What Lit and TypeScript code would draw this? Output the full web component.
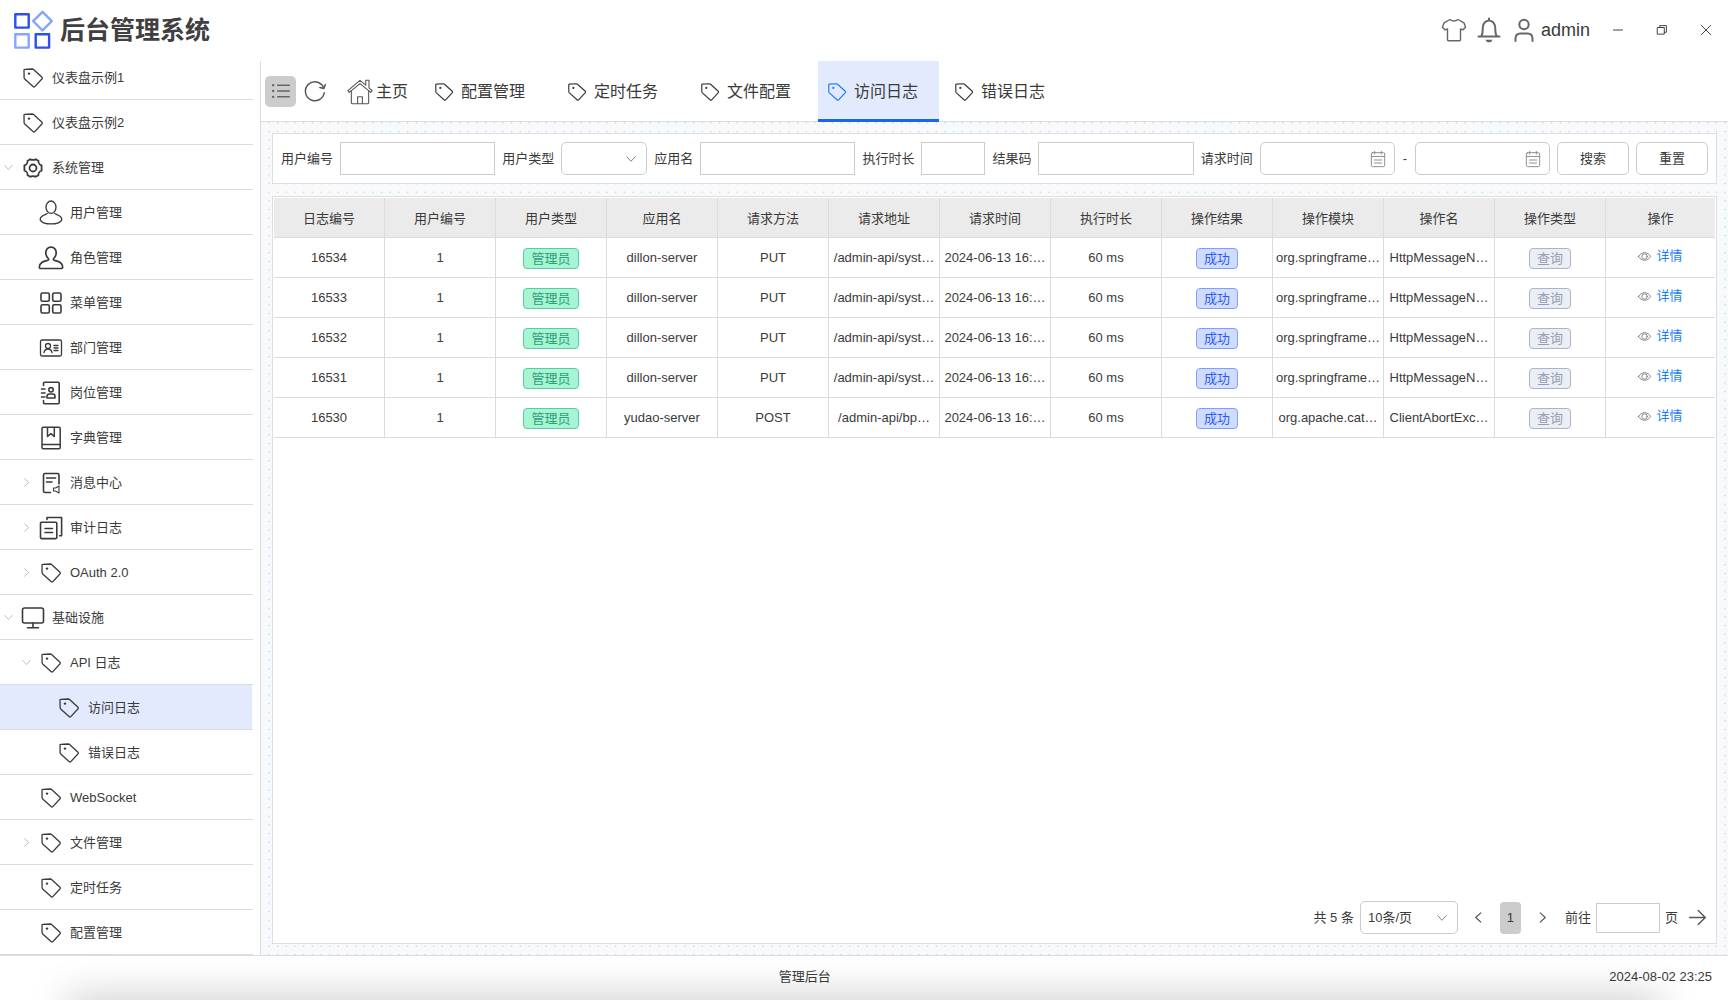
import { LitElement, html, css, svg, type SVGTemplateResult } from "lit";
import { customElement, property, state } from "lit/decorators.js";
import { classMap } from "lit/directives/class-map.js";

type IconName =
  | "tag" | "gear" | "user" | "role" | "grid" | "idcard" | "contacts" | "book"
  | "message" | "audit" | "monitor" | "list" | "refresh" | "home" | "shirt"
  | "bell" | "person" | "minimize" | "restore" | "close" | "chevronDown"
  | "chevronRight" | "chevronLeft" | "calendar" | "eye" | "arrowRight";

/* Every glyph is drawn on a 24 x 24 grid with a stroked outline. */
const ICONS: Record<IconName, SVGTemplateResult> = {
  tag: svg`<path d="M3.6 3.4 11.2 3c.6 0 1 .1 1.4.5l8.4 7.7c.5.5.5 1 .1 1.5l-7.3 7.9c-.5.5-1 .5-1.5.1L3.7 12.9c-.4-.4-.6-.8-.6-1.3L3 4.1c0-.5.2-.7.6-.7Z"/><circle cx="8" cy="7.6" r="1.2" fill="currentColor" stroke="none"/>`,
  gear: svg`<path stroke-width="1.8" d="M9.3 3.2c1.2 1 4.2 1 5.4 0l2.7 1.5c-.2 1.9 1.2 4.2 3.2 4.7v5.2c-2 .5-3.4 2.8-3.2 4.7l-2.7 1.5c-1.2-1-4.2-1-5.4 0l-2.7-1.5c.2-1.9-1.2-4.2-3.2-4.7V9.4c2-.5 3.4-2.8 3.2-4.7Z"/><circle cx="12" cy="12" r="3.5" stroke-width="1.8"/>`,
  user: svg`<ellipse cx="12" cy="6.2" rx="5" ry="6.2"/><path d="M8.3 12.6c-1.200.9-7.100 1.900-7.100 5.700 0 6.200 21.600 6.200 21.600 0 0-3.800-5.900-4.800-7.100-5.700"/>`,
  role: svg`<path stroke-width="1.7" d="M12 1.2c3.3 0 5.3 2.4 5.2 5.7-.1 2.5-1.1 4.3-2.5 5.6-.7.9-.2 1.5.8 1.900 4.300 1.100 8.200 2.300 8.200 6.800 0 .7-.4 1.300-1.100 1.300H1.400c-.7 0-1.100-.6-1.100-1.300 0-4.500 3.900-5.700 8.200-6.800 1-.4 1.500-1 .8-1.900C7.900 11.200 6.900 9.400 6.800 6.900 6.700 3.600 8.700 1.200 12 1.200Z"/>`,
  grid: svg`<g stroke-width="1.6"><rect x="2" y="2" width="8.3" height="8.3" rx="1.5"/><rect x="13.7" y="2" width="8.3" height="8.3" rx="1.5"/><rect x="2" y="13.7" width="8.3" height="8.3" rx="1.5"/><rect x="13.7" y="13.7" width="8.3" height="8.3" rx="1.5"/></g>`,
  idcard: svg`<rect x="1.5" y="4" width="21" height="16" rx="1.5"/><circle cx="9" cy="10" r="2.5"/><path d="M5 16.5c.5-2.3 2-3.5 4-3.5s3.5 1.2 4 3.5M15 9.5h4M15 12h4M15 14.5h4"/>`,
  contacts: svg`<g stroke-width="1.6"><path d="M4.5 4.5V2.5A1.2 1.2 0 0 1 5.7 1.3H19A1.2 1.2 0 0 1 20.2 2.5v19a1.2 1.2 0 0 1-1.2 1.2H5.700a1.200 1.200 0 0 1-1.200-1.200v-2M2.500 8h3.500M2.500 12h3.500M2.500 16h3.500"/><circle cx="12" cy="8.800" r="2.200"/><path d="M8 17v-1.500c0-1.500 1-2.500 2.500-2.500h3c1.500 0 2.500 1 2.500 2.500V17Z"/></g>`,
  book: svg`<path stroke-width="1.5" d="M4.2 1.3h15.8a1.2 1.2 0 0 1 1.2 1.2v19a1.2 1.2 0 0 1-1.2 1.2H4.2A1.2 1.2 0 0 1 3 21.5v-19a1.2 1.2 0 0 1 1.2-1.200ZM3 18.500h18.200M8.500 1.300v9.200l3.400-2.800 3.400 2.800V1.300"/>`,
  message: svg`<path stroke-width="1.6" d="M11.5 21.5H6A1.5 1.5 0 0 1 4.5 20V4A1.5 1.5 0 0 1 6 2.5h12.5A1.5 1.5 0 0 1 20 4v9M7.5 7h9M7.5 11h5.5"/><path stroke-width="1.1" d="M14.5 17h2l3.5-2v7l-3.500-2h-2Z"/>`,
  audit: svg`<path stroke-width="1.6" d="M2.5 6.300h14.300a1 1 0 0 1 1 1v14.300a1 1 0 0 1-1 1H2.500a1 1 0 0 1-1-1V7.300a1 1 0 0 1 1-1ZM8 3.500v-2h14.600v18.200h-2M6 12.500h7.500M6 16.500h7.500"/>`,
  monitor: svg`<g stroke-width="1.6"><rect x="1.5" y="2" width="21" height="15" rx="2"/><path d="M12 17v4.5M6.500 21.800h11"/></g>`,
  list: svg`<path d="M8 5h14M8 12h14M8 19h14"/><path stroke-width="2.8" d="M2.5 5h.1M2.5 12h.1M2.5 19h.1"/>`,
  refresh: svg`<path d="M22 14A10.3 10.3 0 1 1 21.2 8"/><path d="M23.3 5 21.7 9.2 17.3 8.2"/>`,
  home: svg`<path stroke-width="1" d="M12 1.2 .8 10.8l1.2 1.6L12 4.2l10 8.2 1.2-1.6-2.9-2.6V1.2h-3v4.5ZM4 11.2v10.5c0 .7.5 1.2 1.2 1.2h13.6c.7 0 1.2-.5 1.2-1.2V11.2M9.8 22.9v-6.5h4.4v6.5"/>`,
  shirt: svg`<path d="M8 1.5 2 4.8 .5 9.3l2.4 2.5 2.6-.8v10.7c0 .6.4 1 1 1h11c.6 0 1-.4 1-1V11l2.6.8 2.4-2.5L22 4.8 16 1.5c-2.5 1.8-5.5 1.8-8 0Z"/>`,
  bell: svg`<path d="M12 .5v2M1.5 18.5h21M4 18.5c1.5-1.8 1.7-4.3 1.7-7.8 0-5 2.8-8.2 6.3-8.2s6.3 3.2 6.3 8.2c0 3.5.2 6 1.7 7.8"/><path fill="currentColor" stroke="none" d="M8.5 21.7h7c-.7 3.4-6.3 3.4-7 0Z"/>`,
  person: svg`<circle cx="12" cy="6.5" r="4.7"/><path d="M3.5 23v-2.5c0-3 2-5 5-5h7c3 0 5 2 5 5V23"/>`,
  minimize: svg`<path d="M1 12h22"/>`,
  restore: svg`<rect x="1.5" y="6" width="16" height="16"/><path d="M6.5 6V1.5h16v16h-5"/>`,
  close: svg`<path d="m1 1 22 22M23 1 1 23"/>`,
  chevronDown: svg`<path d="m2 6.5 10 11 10-11"/>`,
  chevronRight: svg`<path d="m7 2 11 10L7 22"/>`,
  chevronLeft: svg`<path d="M17 2 6 12l11 10"/>`,
  calendar: svg`<rect x="2" y="2.5" width="20" height="21" rx="2"/><path d="M2 8.2H22M7 .5v4M17 .5v4M6.5 13.5h11M6.5 18h11"/>`,
  eye: svg`<path d="M1 12C5.5 2.5 18.5 2.5 23 12 18.5 21.5 5.5 21.5 1 12Z"/><circle cx="12" cy="12" r="5"/>`,
  arrowRight: svg`<path d="M1 12h22M13 2l10 10-10 10"/>`,
};

@customElement("line-icon")
class LineIcon extends LitElement {
  @property() name: IconName = "tag";
  @property({ type: Number }) weight = 1.4;

  static styles = css`
    :host { display: inline-flex; flex: none; width: 22px; height: 22px; }
    .glyph { width: 100%; height: 100%; overflow: visible; }
  `;

  render() {
    return html`<svg class="glyph" viewBox="0 0 24 24" fill="none" stroke="currentColor"
      stroke-width=${this.weight} stroke-linecap="round" stroke-linejoin="round" aria-hidden="true">
      ${ICONS[this.name]}
    </svg>`;
  }
}

interface MenuNode {
  label: string;
  icon: IconName;
  depth: number;
  arrow?: "open" | "closed";
}

const MENU: MenuNode[] = [
  { label: "仪表盘示例1", icon: "tag", depth: 0 },
  { label: "仪表盘示例2", icon: "tag", depth: 0 },
  { label: "系统管理", icon: "gear", depth: 0, arrow: "open" },
  { label: "用户管理", icon: "user", depth: 1 },
  { label: "角色管理", icon: "role", depth: 1 },
  { label: "菜单管理", icon: "grid", depth: 1 },
  { label: "部门管理", icon: "idcard", depth: 1 },
  { label: "岗位管理", icon: "contacts", depth: 1 },
  { label: "字典管理", icon: "book", depth: 1 },
  { label: "消息中心", icon: "message", depth: 1, arrow: "closed" },
  { label: "审计日志", icon: "audit", depth: 1, arrow: "closed" },
  { label: "OAuth 2.0", icon: "tag", depth: 1, arrow: "closed" },
  { label: "基础设施", icon: "monitor", depth: 0, arrow: "open" },
  { label: "API 日志", icon: "tag", depth: 1, arrow: "open" },
  { label: "访问日志", icon: "tag", depth: 2 },
  { label: "错误日志", icon: "tag", depth: 2 },
  { label: "WebSocket", icon: "tag", depth: 1 },
  { label: "文件管理", icon: "tag", depth: 1, arrow: "closed" },
  { label: "定时任务", icon: "tag", depth: 1 },
  { label: "配置管理", icon: "tag", depth: 1 },
];

interface TabInfo {
  label: string;
  wide?: boolean;
}

const TABS: TabInfo[] = [
  { label: "配置管理", wide: true },
  { label: "定时任务", wide: true },
  { label: "文件配置" },
  { label: "访问日志" },
  { label: "错误日志" },
];

const COLUMNS = [
  "日志编号", "用户编号", "用户类型", "应用名", "请求方法", "请求地址", "请求时间",
  "执行时长", "操作结果", "操作模块", "操作名", "操作类型", "操作",
];

interface LogRow {
  id: number;
  app: string;
  method: string;
  url: string;
  module: string;
  action: string;
}

const served = (id: number): LogRow => ({
  id,
  app: "dillon-server",
  method: "PUT",
  url: "/admin-api/syst…",
  module: "org.springframe…",
  action: "HttpMessageN…",
});

const ROWS: LogRow[] = [
  served(16534),
  served(16533),
  served(16532),
  served(16531),
  { id: 16530, app: "yudao-server", method: "POST", url: "/admin-api/bp…", module: "org.apache.cat…", action: "ClientAbortExc…" },
];

@customElement("app-root")
class AppRoot extends LitElement {
  @state() private current = "访问日志";

  static styles = css`
    :host {
      display: flex;
      flex-direction: column;
      height: 100vh;
      overflow: hidden;
      background: #fff;
      color: #3a3a3a;
      font: 13px/20px "Liberation Sans", "Noto Sans CJK SC", sans-serif;
    }
    * { box-sizing: border-box; }
    button, input, select { font: inherit; color: inherit; margin: 0; outline: none; }
    button { border: 0; background: none; padding: 0; cursor: pointer; }

    .header { display: flex; align-items: center; height: 55px; padding: 4px 17px 0 12px; flex: none; }
    .logo { width: 42px; height: 42px; flex: none; }
    .title { margin: 0 auto 0 6px; font-size: 25px; line-height: 36px; font-weight: 700; color: #404040; }
    .tools { display: flex; align-items: center; color: #666; }
    .tool { display: flex; align-items: center; }
    .shirt { width: 24px; height: 24px; margin-right: 11px; }
    .bell { width: 24px; height: 24px; margin-right: 11px; }
    .person { width: 24px; height: 24px; margin-right: 5px; }
    .account { font-size: 18px; color: #3a3a3a; margin-right: 23px; }
    .window { display: flex; gap: 34px; color: #444; }
    .window line-icon { width: 10px; height: 10px; }

    .body { display: flex; flex: 1; min-height: 0; }
    .sidebar { flex: none; width: 260px; padding-right: 7px; overflow: hidden; }
    .menu { list-style: none; margin: 0; padding: 0; }
    .item { height: 45px; border-bottom: 1px solid #dcdcdc; }
    .entry { display: flex; align-items: center; width: 252px; height: 44px; padding-top: 1px; text-align: left; }
    .entry.active { background: #e4eafe; }
    .depth1 { padding-left: 18px; }
    .depth2 { padding-left: 36px; }
    .arrow { width: 9px; height: 9px; margin: 0 8px 0 4px; color: #aaa; }
    .kind { width: 24px; height: 24px; margin-right: 7px; }
    .arrow.none { visibility: hidden; }

    .main { display: flex; flex-direction: column; flex: 1; min-width: 0; margin-top: 6px; border-left: 1px solid #dcdcdc; }
    .tabs { display: flex; align-items: center; height: 61px; flex: none; border-bottom: 1px solid #dcdcdc; padding-left: 4px; font-size: 16px; }
    .toggle { display: flex; align-items: center; justify-content: center; width: 31px; height: 31px; border-radius: 5px; background: #ccc; color: #666; }
    .toggle line-icon { width: 20px; height: 20px; }
    .reload { display: flex; margin: 0 21px 0 8px; color: #555; }
    .home { display: flex; align-items: center; gap: 3px; margin-right: 17px; padding-top: 2px; }
    .home line-icon { width: 26px; height: 26px; color: #555; }
    .tab { display: flex; align-items: center; gap: 6px; height: 61px; width: 121px; margin-right: 6px; padding: 2px 0 0 8px; }
    .tab.wide { width: 127px; }
    .tab.active { background: #e4eafe; box-shadow: inset 0 -3px #1668e3; }
    .tab.active line-icon { color: #1a7efb; }

    .content { position: relative; display: flex; flex-direction: column; gap: 12px; flex: 1; min-height: 0; padding: 11px; background: #f8f9fb; }
    .dots { position: absolute; inset: 0; width: 100%; height: 100%; }
    .panel { position: relative; background: #fff; border: 1px solid #dcdee0; }

    .filters { display: flex; align-items: center; gap: 7px; padding: 8px; flex: none; }
    .filters label { white-space: nowrap; }
    .box { height: 33px; border: 1px solid #ccc; background: #fff; padding: 0 8px; min-width: 0; }
    .grow { flex: 1 1 156px; }
    .short { width: 64px; flex: none; }
    .dash { padding: 0 1px; }
    .picker { position: relative; display: flex; align-items: center; flex: none; }
    .picker .box { width: 100%; border-radius: 5px; appearance: none; }
    .picker line-icon { position: absolute; right: 11px; width: 10px; height: 10px; color: #777; pointer-events: none; }
    .kind-select { width: 86px; }
    .date { width: 135px; }
    .picker.date line-icon { right: 9px; width: 16px; height: 16px; color: #888; }
    .btn { flex: none; width: 72px; height: 33px; border: 1px solid #ccc; border-radius: 5px; background: #fff; }

    .results { display: flex; flex-direction: column; justify-content: space-between; flex: 1; min-height: 0; padding: 1px; }
    .log { width: 100%; table-layout: fixed; border-collapse: separate; border-spacing: 0; text-align: center; }
    .col { width: 111px; }
    .log th, .log td { height: 40px; padding: 0; border-right: 1px solid #dcdcdc; border-bottom: 1px solid #dcdcdc; font-weight: 400; white-space: nowrap; overflow: hidden; }
    .log th { background: #ebebeb; padding-top: 2px; }
    .log th:last-child, .log td:last-child { border-right: 0; }
    .log .mark { padding-top: 2px; }
    .tag { display: inline-block; height: 21px; line-height: 19px; padding: 0 7px; border: 1px solid; border-radius: 4px; vertical-align: middle; }
    .green { background: #a7f5d2; border-color: #52cfa4; color: #2f9e78; }
    .blue { background: #d0dcff; border-color: #7f9ffb; color: #2b5af5; }
    .gray { background: #ebeef5; border-color: #aab5ca; color: #959fb3; }
    .detail { display: inline-flex; align-items: center; gap: 5px; color: #1a7efb; text-decoration: none; padding-bottom: 1px; }
    .detail line-icon { width: 13px; height: 13px; color: #777; }

    .pager { display: flex; align-items: center; justify-content: flex-end; padding: 0 9px 8px 0; }
    .size { width: 98px; margin: 0 15px 0 6px; }
    .size .box { padding: 0 7px; }
    .step { display: flex; color: #555; }
    .step line-icon { width: 11px; height: 11px; }
    .page { width: 21px; height: 32px; margin: 0 16px; border-radius: 4px; background: #ccc; }
    .goto { margin-left: 17px; }
    .jump { width: 64px; height: 30px; margin: 0 5px; }
    .go { display: flex; margin-left: 11px; color: #555; }
    .go line-icon { width: 17px; height: 17px; }

    .footer { display: flex; align-items: center; flex: none; height: 45px; padding: 0 16px 3px 0; border-top: 1px solid #dcdcdc; position: relative; overflow: hidden; }
    .footer::after { content: ""; position: absolute; left: 72px; right: 72px; bottom: -20px; height: 16px; box-shadow: 0 0 40px 4px rgba(0, 0, 0, 0.28); }
    .caption { flex: 1; text-align: center; }
  `;

  private renderMenuItem(node: MenuNode) {
    const active = node.label === this.current;
    return html`<li class="item">
      <button class="entry depth${node.depth} ${active ? "active" : ""}" @click=${() => this.open(node)}>
        <line-icon class="arrow ${node.arrow ? "" : "none"}" weight="2"
          name=${node.arrow === "closed" ? "chevronRight" : "chevronDown"}></line-icon>
        <line-icon class="kind" name=${node.icon} weight="1.3"></line-icon>
        <span>${node.label}</span>
      </button>
    </li>`;
  }

  private open(node: MenuNode) {
    if (TABS.some((tab) => tab.label === node.label)) this.current = node.label;
  }

  private renderTab({ label, wide = false }: TabInfo) {
    const classes = { tab: true, wide, active: label === this.current };
    return html`<button class=${classMap(classes)} @click=${() => (this.current = label)}>
      <line-icon name="tag" weight="1.3"></line-icon><span>${label}</span>
    </button>`;
  }

  private renderDots() {
    const spots = [1, 9.67, 18.33];
    return html`<svg class="dots" aria-hidden="true">
      <defs>
        <pattern id="dot" width="26" height="26" patternUnits="userSpaceOnUse">
          ${spots.map((y) => spots.map((x) => svg`<circle cx=${x + 7} cy=${y - 0.2} r=".7" fill="#fff"/>`))}
        </pattern>
        <mask id="dotmask"><rect width="100%" height="100%" fill="url(#dot)"/></mask>
        <linearGradient id="tint" x1="0" y1="0" x2="260" y2="60" gradientUnits="userSpaceOnUse" spreadMethod="reflect">
          <stop offset="0" stop-color="#ffb8d8"/><stop offset=".5" stop-color="#98dcf8"/><stop offset="1" stop-color="#d4c0f8"/>
        </linearGradient>
      </defs>
      <rect width="100%" height="100%" fill="url(#tint)" mask="url(#dotmask)"/>
    </svg>`;
  }

  private renderFilters() {
    return html`<form class="panel filters" @submit=${(e: Event) => e.preventDefault()}>
      <label for="uid">用户编号</label><input id="uid" class="box grow">
      <label for="utype">用户类型</label>
      <span class="picker kind-select"><select id="utype" class="box"><option></option></select><line-icon name="chevronDown" weight="2.2"></line-icon></span>
      <label for="app">应用名</label><input id="app" class="box grow">
      <label for="cost">执行时长</label><input id="cost" class="box short">
      <label for="code">结果码</label><input id="code" class="box grow">
      <label id="period" for="from">请求时间</label>
      <span class="picker date"><input id="from" class="box"><line-icon name="calendar"></line-icon></span>
      <span class="dash">-</span>
      <span class="picker date"><input id="to" class="box" aria-labelledby="period"><line-icon name="calendar"></line-icon></span>
      <button class="btn" type="submit">搜索</button>
      <button class="btn" type="reset">重置</button>
    </form>`;
  }

  private renderRow(row: LogRow) {
    return html`<tr>
      <td>${row.id}</td>
      <td>1</td>
      <td class="mark"><span class="tag green">管理员</span></td>
      <td>${row.app}</td>
      <td>${row.method}</td>
      <td>${row.url}</td>
      <td>2024-06-13 16:…</td>
      <td>60 ms</td>
      <td class="mark"><span class="tag blue">成功</span></td>
      <td>${row.module}</td>
      <td>${row.action}</td>
      <td class="mark"><span class="tag gray">查询</span></td>
      <td><a class="detail" href="#${row.id}"><line-icon name="eye" weight="1.6"></line-icon>详情</a></td>
    </tr>`;
  }

  private renderPager() {
    return html`<div class="pager">
      <label for="size">共 5 条</label>
      <span class="picker size"><select id="size" class="box"><option>10条/页</option></select><line-icon name="chevronDown" weight="2.2"></line-icon></span>
      <button class="step"><line-icon name="chevronLeft" weight="2.6"></line-icon></button>
      <button class="page">1</button>
      <button class="step"><line-icon name="chevronRight" weight="2.6"></line-icon></button>
      <label class="goto" for="jump">前往</label>
      <input id="jump" class="box jump">
      <span>页</span>
      <button class="go"><line-icon name="arrowRight" weight="2"></line-icon></button>
    </div>`;
  }

  render() {
    return html`
      <header class="header">
        <svg class="logo" viewBox="0 0 42 42" fill="none" stroke-width="2.4" stroke-linejoin="round" aria-hidden="true">
          <path stroke="#2c4ff2" d="M3.3 5.2h13.4v13.4H3.3ZM23.7 25.2h13.4v13.4H23.7Z"/>
          <path stroke="#85a5ff" d="M3.3 25.2h13.4v13.4H3.3ZM30.5 2.8l9.3 9.3-9.3 9.3-9.3-9.3Z"/>
        </svg>
        <h1 class="title">后台管理系统</h1>
        <div class="tools">
          <button class="tool"><line-icon class="shirt" name="shirt"></line-icon></button>
          <button class="tool"><line-icon class="bell" name="bell" weight="2"></line-icon></button>
          <button class="tool"><line-icon class="person" name="person" weight="2"></line-icon><span class="account">admin</span></button>
          <div class="window">
            <button class="tool"><line-icon name="minimize" weight="2.4"></line-icon></button>
            <button class="tool"><line-icon name="restore" weight="2.4"></line-icon></button>
            <button class="tool"><line-icon name="close" weight="2.4"></line-icon></button>
          </div>
        </div>
      </header>
      <div class="body">
        <nav class="sidebar"><ul class="menu">${MENU.map((node) => this.renderMenuItem(node))}</ul></nav>
        <main class="main">
          <div class="tabs">
            <button class="toggle"><line-icon name="list" weight="1.8"></line-icon></button>
            <button class="reload"><line-icon name="refresh" weight="1.6"></line-icon></button>
            <button class="home"><line-icon name="home"></line-icon><span>主页</span></button>
            ${TABS.map((tab) => this.renderTab(tab))}
          </div>
          <div class="content">
            ${this.renderDots()}
            ${this.renderFilters()}
            <section class="panel results">
              <table class="log">
                <colgroup>${COLUMNS.slice(1).map(() => html`<col class="col">`)}<col></colgroup>
                <thead><tr>${COLUMNS.map((name) => html`<th>${name}</th>`)}</tr></thead>
                <tbody>${ROWS.map((row) => this.renderRow(row))}</tbody>
              </table>
              ${this.renderPager()}
            </section>
          </div>
        </main>
      </div>
      <footer class="footer"><span class="caption">管理后台</span><time>2024-08-02 23:25</time></footer>
    `;
  }
}
